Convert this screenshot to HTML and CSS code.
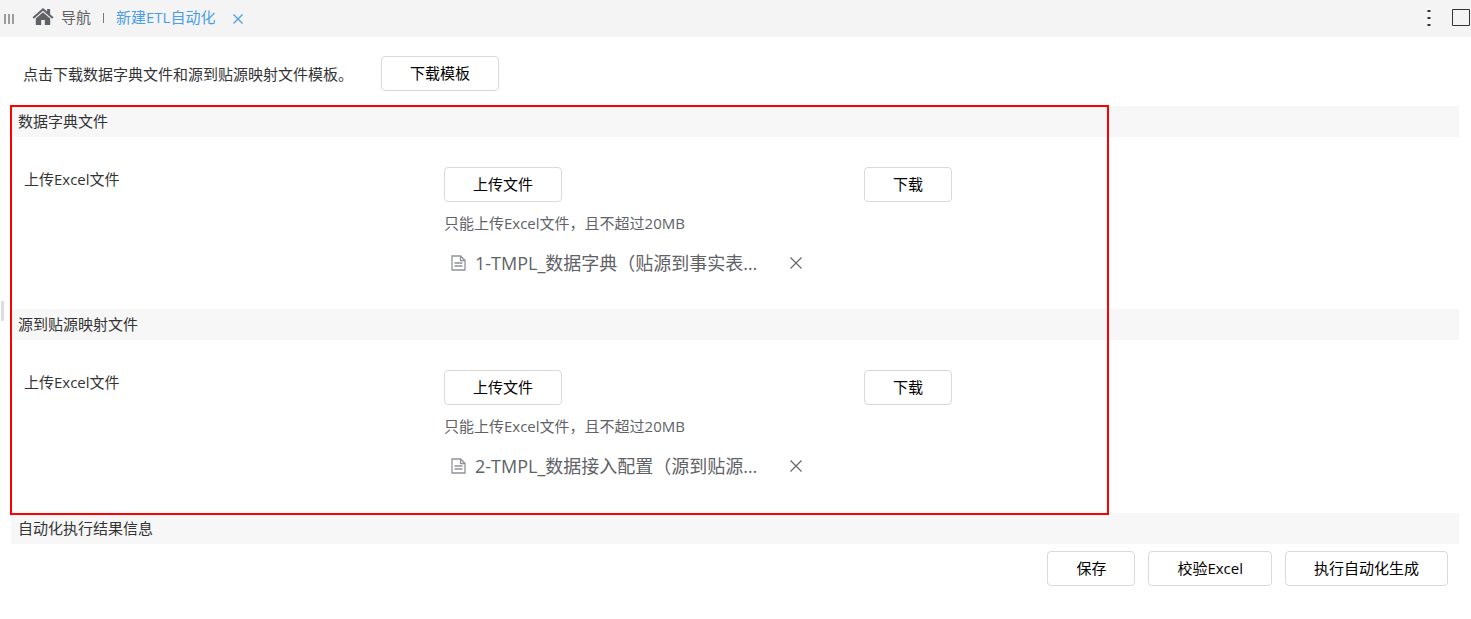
FILE: index.html
```html
<!DOCTYPE html>
<html lang="zh-CN">
<head>
  <meta charset="UTF-8">
  <meta name="viewport" content="width=device-width, initial-scale=1.0">
  <title>新建ETL自动化</title>
  <link rel="stylesheet" href="styles.css">
</head>
<body>
<header class="tab-bar">
  <button class="icon-btn menu-btn" aria-label="菜单">
    <svg width="11" height="10" viewBox="0 0 11 10" stroke="#777" stroke-width="1.4"><path d="M1 0v10M5 0v10M9 0v10"/></svg>
  </button>
  <a class="nav-link" href="#">
    <svg width="22" height="18" viewBox="0 0 22 18" fill="#606266"><path d="M11 0L0.5 9.2l1.4 1.5L11 2.8l9.1 7.9 1.4-1.5-3.4-3V1h-3v2.6z"/><path d="M11 4.2L3.8 10.4V17h5.4v-5h3.6v5h5.4v-6.6z"/></svg>
    导航
  </a>
  <span class="divider"></span>
  <a class="nav-tab" href="#">新建ETL自动化</a>
  <button class="icon-btn tab-close" aria-label="关闭">
    <svg width="10" height="10" viewBox="0 0 10 10" stroke="#4a9de8" stroke-width="1.3"><path d="M0.5 0.5l9 9M9.5 0.5l-9 9"/></svg>
  </button>
  <div class="tab-tools">
    <button class="icon-btn" aria-label="更多">
      <svg width="4" height="18" viewBox="0 0 4 18" fill="#333"><path d="M0.5 1h3v2h-3zM0.5 8h3v2h-3zM0.5 15h3v2h-3z"/></svg>
    </button>
    <button class="icon-btn" aria-label="最大化">
      <svg width="19" height="18" viewBox="0 0 19 18" fill="none" stroke="#333"><path d="M0.5 0.5h17v16h-17z"/></svg>
    </button>
  </div>
</header>

<div class="side-handle"></div>

<main>
  <div class="template-row">
    <span>点击下载数据字典文件和源到贴源映射文件模板。</span>
    <button class="btn">下载模板</button>
  </div>

  <div class="upload-area">
    <section>
      <h2 class="section-title">数据字典文件</h2>
      <div class="upload-row">
        <span class="upload-label">上传Excel文件</span>
        <div>
          <button class="btn">上传文件</button>
          <p class="tip">只能上传Excel文件，且不超过20MB</p>
          <div class="file-item">
            <svg width="15" height="16" viewBox="0 0 15 16" fill="none" stroke="#909399" stroke-width="1.3"><path d="M1 1h8.5L14 5.2V15H1zM9.5 1v4.5H14M3.5 8h8M3.5 11h8"/></svg>
            <span class="file-name">1-TMPL_数据字典（贴源到事实表…</span>
            <button class="icon-btn" aria-label="删除">
              <svg width="12" height="12" viewBox="0 0 12 12" stroke="#606266" stroke-width="1.1"><path d="M0.5 0.5l11 11M11.5 0.5l-11 11"/></svg>
            </button>
          </div>
        </div>
        <div><button class="btn">下载</button></div>
      </div>
    </section>

    <section>
      <h2 class="section-title">源到贴源映射文件</h2>
      <div class="upload-row">
        <span class="upload-label">上传Excel文件</span>
        <div>
          <button class="btn">上传文件</button>
          <p class="tip">只能上传Excel文件，且不超过20MB</p>
          <div class="file-item">
            <svg width="15" height="16" viewBox="0 0 15 16" fill="none" stroke="#909399" stroke-width="1.3"><path d="M1 1h8.5L14 5.2V15H1zM9.5 1v4.5H14M3.5 8h8M3.5 11h8"/></svg>
            <span class="file-name">2-TMPL_数据接入配置（源到贴源…</span>
            <button class="icon-btn" aria-label="删除">
              <svg width="12" height="12" viewBox="0 0 12 12" stroke="#606266" stroke-width="1.1"><path d="M0.5 0.5l11 11M11.5 0.5l-11 11"/></svg>
            </button>
          </div>
        </div>
        <div><button class="btn">下载</button></div>
      </div>
    </section>
    <div class="highlight"></div>
  </div>

  <h2 class="section-title">自动化执行结果信息</h2>
  <div class="actions">
    <button class="btn">保存</button>
    <button class="btn">校验Excel</button>
    <button class="btn">执行自动化生成</button>
  </div>
</main>
</body>
</html>
```
FILE: styles.css
```css
* {
  box-sizing: border-box;
}

body {
  margin: 0;
  background-color: #fff;
  color: #333;
  font-family: "Open Sans", "Noto Sans CJK SC", sans-serif;
  font-size: 15px;
  line-height: 20px;
}

a {
  text-decoration: none;
}

.tab-bar {
  display: flex;
  align-items: center;
  height: 37px;
  padding: 0 0 3px 4px;
  background-color: #f4f4f4;
}

.icon-btn {
  display: flex;
  padding: 0;
  border: none;
  background: none;
  cursor: pointer;
}

.menu-btn,
.tab-close {
  margin-top: 3px;
}

.nav-link {
  display: flex;
  align-items: center;
  gap: 7px;
  margin-left: 17px;
  color: #606266;
}

.divider {
  width: 1px;
  height: 10px;
  margin: 2px 12px 0;
  background-color: #777;
}

.nav-tab {
  color: #4a9de8;
}

.tab-close {
  margin-left: 18px;
}

.tab-tools {
  display: flex;
  align-items: center;
  gap: 21px;
  margin: 2px 0 0 auto;
}

.side-handle {
  position: absolute;
  top: 50%;
  left: 1px;
  width: 3px;
  height: 20px;
  margin-top: -9px;
  background-color: #ddd;
}

main {
  padding: 19px 12px 0 11px;
}

.template-row {
  display: flex;
  align-items: center;
  gap: 28px;
  margin-bottom: 15px;
  padding-left: 12px;
}

.btn {
  height: 35px;
  padding: 0 28px 2px;
  border: 1px solid #d9d9d9;
  border-radius: 4px;
  background-color: #fff;
  color: #000;
  font-family: inherit;
  font-size: 15px;
  line-height: 20px;
  cursor: pointer;
}

.upload-area {
  position: relative;
  padding-bottom: 1px;
}

.section-title {
  margin: 0;
  padding: 5px 7px 6px;
  background-color: #f7f7f7;
  font-size: 15px;
  font-weight: normal;
}

.upload-row {
  display: grid;
  grid-template-columns: 12fr 12fr 17fr;
  padding: 30px 0 34px 13px;
}

.upload-label {
  padding-top: 2px;
}

.tip {
  margin: 11px 0 18px;
  color: #606266;
}

.file-item {
  display: flex;
  align-items: center;
  width: 358px;
  padding-left: 7px;
  color: #606266;
  font-size: 18px;
  line-height: 24px;
}

.file-name {
  flex: 1;
  margin-left: 9px;
  white-space: nowrap;
}

/* red frame around the two upload sections */
.highlight {
  position: absolute;
  top: -1px;
  right: 350px;
  bottom: -2px;
  left: -1px;
  border: 2px solid #f00;
  pointer-events: none;
}

.actions {
  display: flex;
  justify-content: flex-end;
  gap: 13px;
  padding: 7px 11px 0 0;
}
```
